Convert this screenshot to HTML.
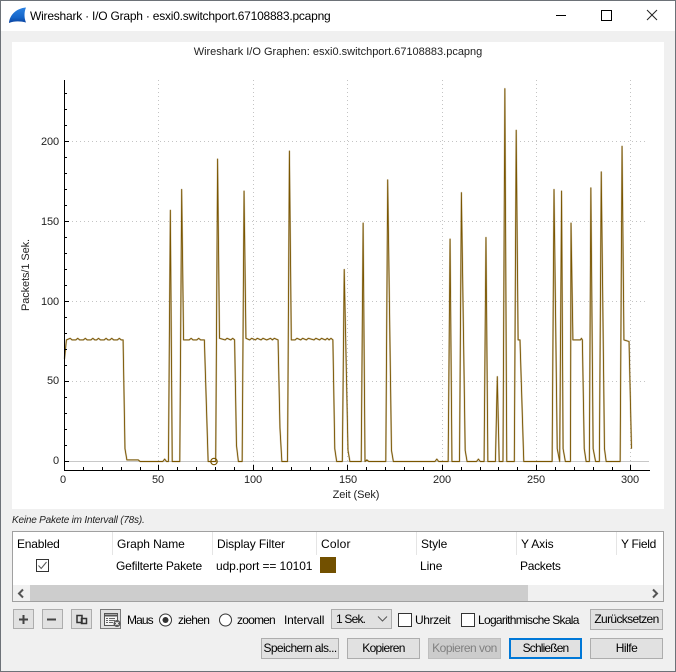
<!DOCTYPE html>
<html><head><meta charset="utf-8">
<style>
html,body{margin:0;padding:0;background:#f0f0f0}
#w{position:relative;width:676px;height:672px;overflow:hidden;background:#f0f0f0;font-family:"Liberation Sans",sans-serif;font-size:12px;color:#000}
#w>div,#w>span,#w>svg{position:absolute}
.t{white-space:nowrap;line-height:16px;height:16px;letter-spacing:-.1px}
.b{box-sizing:border-box;background:#e1e1e1;border:1px solid #adadad;text-align:center;line-height:18px;white-space:nowrap;letter-spacing:-.6px}
.c{box-sizing:border-box;width:14px;height:14px;background:#fff;border:1px solid #333}
.s{border-left:1px solid #e5e5e5;width:0;top:532px;height:23px}
</style></head><body><div id="w">
<div style="left:0;top:0;width:676px;height:31px;background:#fff"></div>
<svg style="left:8px;top:6px" width="20" height="18" viewBox="0 0 20 18"><defs><linearGradient id="g" x1="0" y1="0" x2="0" y2="1"><stop offset="0" stop-color="#2b82e2"/><stop offset=".65" stop-color="#1565c8"/><stop offset="1" stop-color="#0a3f9c"/></linearGradient></defs><path d="M1 17C1.500 10 7 2.500 18 1.500C16 6 16 12 18 16.500C12 15 6 15 1 17Z" fill="url(#g)"/></svg>
<span class="t" style="left:30px;top:8px;font-size:12px;letter-spacing:-.22px">Wireshark · I/O Graph · esxi0.switchport.67108883.pcapng</span>
<svg style="left:540px;top:0" width="136" height="31"><path d="M16 15.500H26" stroke="#000"/><rect x="61.500" y="10.500" width="10" height="10" fill="none" stroke="#000"/><path d="M107 10L117 20M117 10L107 20" stroke="#222"/></svg>
<div style="left:12px;top:42px;width:652px;height:467px;background:#fff"></div>
<span class="t" style="left:12px;width:652px;text-align:center;top:44px;font-size:11px;letter-spacing:0;color:#222">Wireshark I/O Graphen: esxi0.switchport.67108883.pcapng</span>
<svg style="left:0;top:0" width="676" height="510">
<g stroke="#c4c4c4" stroke-dasharray="1 3" fill="none">
<path d="M158.500 80V470M253.500 80V470M347.500 80V470M442.500 80V470M536.500 80V470M630.500 80V470"/>
<path d="M64 381.500H647M64 301.500H647M64 221.500H647M64 141.500H647"/>
</g>
<path d="M64 461.500H649" stroke="#c8c8c8"/>
<defs><polyline id="p" vector-effect="non-scaling-stroke" fill="none" stroke-linejoin="round" points="0,64 1,76 3,77 4,76 6,76 7,77 8,76 10,76 11,77 12,76 14,76 15,77 16,76 17,76 18,77 19,76 21,76 22,77 23,76 24,76 25,77 26,76 28,76 29,77 30,76 31,76 32,8 33,1 39,1 40,0 52,0 53,1.500 54,0 55,0 56,157 57,0 61,0 62,170 63,76 66,76 67,77 68,76 70,76 71,77 72,76 73,76 74,76 76,0 80,0 81,189 82,77 85,76 86,77 88,76 89,77 90,76 91,10 92,0 94,0 95,169 96,77 98,76 99,77 101,76 102,77 104,76 105,77 107,76 109,77 110,76 111,77 113,76 114,21 115,0 118,0 119,194 120,76 122,76 123,77 125,76 126,77 128,76 129,77 132,76 133,77 135,76 136,77 138,76 139,77 140,76 141,77 142,76 143,8 144,0 147,0 148,120 150,7 151,0 157,0 158,149 159,0 160,1 161,0 170,0 171,176 173,7 174,0 196,0 197,1.500 198,0 203,0 204,139 205,0 209,0 210,168 212,7 213,0 218,0 219,1.500 220,0 222,0 223,140 224,0 228,0 229,53 230,0 232,0 233,233 234,0 238,0 239,207 240,76 241,76 243,0 258,0 259,170 260.700,8 262,0 263,169 263.800,8 265,0 267.700,0 268,149 269,76 273,76 273.500,77 274,76 275,8 276,0 277.700,0 278.500,171 279.700,8 281,0 283,0 284,181 285.700,8 286.600,0 294,0 295,197 296,76 298.700,75 300,8"/></defs>
<g transform="translate(64.500,461.500) scale(1.89,-1.6)">
<use href="#p" stroke="#a89468" stroke-opacity=".5" stroke-width="1.800"/>
<use href="#p" stroke="#7a5600" stroke-width=".9"/>
</g>
<circle cx="214" cy="461.500" r="3.200" fill="none" stroke="#7a5600" stroke-width="1.200"/>
<g stroke="#000" fill="none">
<path d="M64.500 80V470.500H650"/>
<path d="M64 461.500h5M64 381.500h5M64 301.500h5M64 221.500h5M64 141.500h5"/>
<path d="M64 445.500h3M64 429.500h3M64 413.500h3M64 397.500h3M64 365.500h3M64 349.500h3M64 333.500h3M64 317.500h3M64 285.500h3M64 269.500h3M64 253.500h3M64 237.500h3M64 205.500h3M64 189.500h3M64 173.500h3M64 157.500h3M64 125.500h3M64 109.500h3M64 93.500h3"/>
<path d="M158.500 470v-5M253.500 470v-5M347.500 470v-5M442.500 470v-5M536.500 470v-5M630.500 470v-5"/>
<path d="M83.500 470v-3M102.500 470v-3M121.500 470v-3M140.500 470v-3M177.500 470v-3M196.500 470v-3M215.500 470v-3M234.500 470v-3M272.500 470v-3M291.500 470v-3M310.500 470v-3M328.500 470v-3M366.500 470v-3M385.500 470v-3M404.500 470v-3M423.500 470v-3M461.500 470v-3M480.500 470v-3M498.500 470v-3M517.500 470v-3M555.500 470v-3M574.500 470v-3M593.500 470v-3M612.500 470v-3"/>
</g>
</svg>
<span class="t" style="left:29px;width:30px;text-align:right;top:453px;font-size:11px;color:#222">0</span>
<span class="t" style="left:29px;width:30px;text-align:right;top:373px;font-size:11px;color:#222">50</span>
<span class="t" style="left:29px;width:30px;text-align:right;top:294px;font-size:11px;color:#222">100</span>
<span class="t" style="left:29px;width:30px;text-align:right;top:214px;font-size:11px;color:#222">150</span>
<span class="t" style="left:29px;width:30px;text-align:right;top:134px;font-size:11px;color:#222">200</span>
<span class="t" style="left:43px;width:40px;text-align:center;top:472px;font-size:11px;color:#222">0</span>
<span class="t" style="left:138px;width:40px;text-align:center;top:472px;font-size:11px;color:#222">50</span>
<span class="t" style="left:233px;width:40px;text-align:center;top:472px;font-size:11px;color:#222">100</span>
<span class="t" style="left:328px;width:40px;text-align:center;top:472px;font-size:11px;color:#222">150</span>
<span class="t" style="left:422px;width:40px;text-align:center;top:472px;font-size:11px;color:#222">200</span>
<span class="t" style="left:516px;width:40px;text-align:center;top:472px;font-size:11px;color:#222">250</span>
<span class="t" style="left:610px;width:40px;text-align:center;top:472px;font-size:11px;color:#222">300</span>
<span class="t" style="left:306px;width:100px;text-align:center;top:487px;font-size:11px;color:#222">Zeit (Sek)</span>
<span class="t" style="left:-24px;width:100px;text-align:center;top:267px;font-size:11px;color:#222;transform:rotate(-90deg)">Packets/1 Sek.</span>

<span class="t" style="left:12px;top:513px;font-size:10px;font-style:italic;color:#222;letter-spacing:-.2px">Keine Pakete im Intervall (78s).</span>

<div style="left:12px;top:531px;width:652px;height:71px;box-sizing:border-box;background:#fff;border:1px solid #a0a0a0"></div>
<div class="s" style="left:112px"></div><div class="s" style="left:212px"></div><div class="s" style="left:316px"></div><div class="s" style="left:416px"></div><div class="s" style="left:516px"></div><div class="s" style="left:616px"></div>
<span class="t" style="left:17px;top:536px;letter-spacing:-.2px">Enabled</span>
<span class="t" style="left:117px;top:536px">Graph Name</span>
<span class="t" style="left:217px;top:536px">Display Filter</span>
<span class="t" style="left:321px;top:536px;letter-spacing:.2px">Color</span>
<span class="t" style="left:421px;top:536px">Style</span>
<span class="t" style="left:521px;top:536px">Y Axis</span>
<span class="t" style="left:621px;top:536px;letter-spacing:-.3px">Y Field</span>
<svg style="left:36px;top:559px" width="14" height="14"><rect x=".5" y=".5" width="12" height="12" fill="#fff" stroke="#333"/><path d="M2.500 6.500L5.200 9.500L10.500 3" fill="none" stroke="#555"/></svg>
<span class="t" style="left:116px;top:558px;letter-spacing:-.2px">Gefilterte Pakete</span>
<span class="t" style="left:216px;top:558px">udp.port == 10101</span>
<div style="left:320px;top:557px;width:16px;height:16px;background:#725000"></div>
<span class="t" style="left:420px;top:558px">Line</span>
<span class="t" style="left:520px;top:558px;letter-spacing:-.3px">Packets</span>
<div style="left:13px;top:585px;width:650px;height:16px;background:#f0f0f0"></div>
<div style="left:30px;top:585px;width:498px;height:16px;background:#cdcdcd"></div>
<svg style="left:13px;top:585px" width="650" height="16"><path d="M10 4.500L6 8.500L10 12.500M640 4.500L644 8.500L640 12.500" fill="none" stroke="#555" stroke-width="2"/></svg>

<div class="b" style="left:13px;top:609px;width:21px;height:20px"></div>
<div class="b" style="left:42px;top:609px;width:21px;height:20px"></div>
<div class="b" style="left:71px;top:609px;width:21px;height:20px"></div>
<div class="b" style="left:100px;top:609px;width:21px;height:20px;border-color:#7a7a7a"></div>
<svg style="left:13px;top:609px" width="110" height="20">
<path d="M6 10.500h9M10.500 6v9M34 10.500h9" stroke="#444" stroke-width="2" fill="none"/>
<path d="M64 6.500h5v7h-5zM68.500 9.500h5v5h-5z" fill="none" stroke="#333" stroke-width="1.500"/>
<rect x="91.500" y="4.500" width="13" height="12" fill="#f4f4f4" stroke="#555"/><path d="M91 6.500h14" stroke="#555" stroke-width="2"/><path d="M93 9.500h2M93 11.500h2M93 13.500h2M96 9.500h6M96 11.500h6M96 13.500h4" stroke="#666"/><circle cx="104" cy="14.500" r="3.500" fill="#555"/><path d="M102.500 13L105.500 16M105.500 13L102.500 16" stroke="#fff"/>
</svg>
<span class="t" style="left:127px;top:612px;letter-spacing:-.9px">Maus</span>
<svg style="left:158px;top:612px" width="80" height="16"><circle cx="7.500" cy="8" r="6" fill="#fff" stroke="#333"/><circle cx="7.500" cy="8" r="3" fill="#333"/><circle cx="67.500" cy="8" r="6" fill="#fff" stroke="#333"/></svg>
<span class="t" style="left:178px;top:612px;letter-spacing:-.7px">ziehen</span>
<span class="t" style="left:237px;top:612px;letter-spacing:-.8px">zoomen</span>
<span class="t" style="left:284px;top:612px;letter-spacing:-.2px">Intervall</span>
<div class="b" style="left:331px;top:609px;width:61px;height:20px;text-align:left;padding-left:4px;letter-spacing:-.8px">1 Sek.</div>
<svg style="left:377px;top:615px" width="12" height="8"><path d="M1 1.500L5.500 6L10 1.500" fill="none" stroke="#555"/></svg>
<div class="c" style="left:398px;top:613px;border-color:#333"></div>
<span class="t" style="left:415px;top:612px;letter-spacing:-.4px">Uhrzeit</span>
<div class="c" style="left:461px;top:613px"></div>
<span class="t" style="left:478px;top:612px;letter-spacing:-.7px">Logarithmische Skala</span>
<div class="b" style="left:590px;top:609px;width:73px;height:21px;letter-spacing:-.65px">Zurücksetzen</div>

<div class="b" style="left:261px;top:638px;width:78px;height:21px;letter-spacing:-.6px">Speichern als...</div>
<div class="b" style="left:347px;top:638px;width:73px;height:21px;letter-spacing:-.7px">Kopieren</div>
<div class="b" style="left:428px;top:638px;width:73px;height:21px;background:#ccc;border-color:#bfbfbf;color:#808080;letter-spacing:-.5px">Kopieren von</div>
<div class="b" style="left:509px;top:638px;width:73px;height:21px;border:2px solid #0078d7;line-height:17px;letter-spacing:-.85px">Schließen</div>
<div class="b" style="left:590px;top:638px;width:73px;height:21px;letter-spacing:-.5px">Hilfe</div>

<div style="left:0;top:0;width:676px;height:672px;box-sizing:border-box;border:1px solid #6d7278"></div>
</div></body></html>
